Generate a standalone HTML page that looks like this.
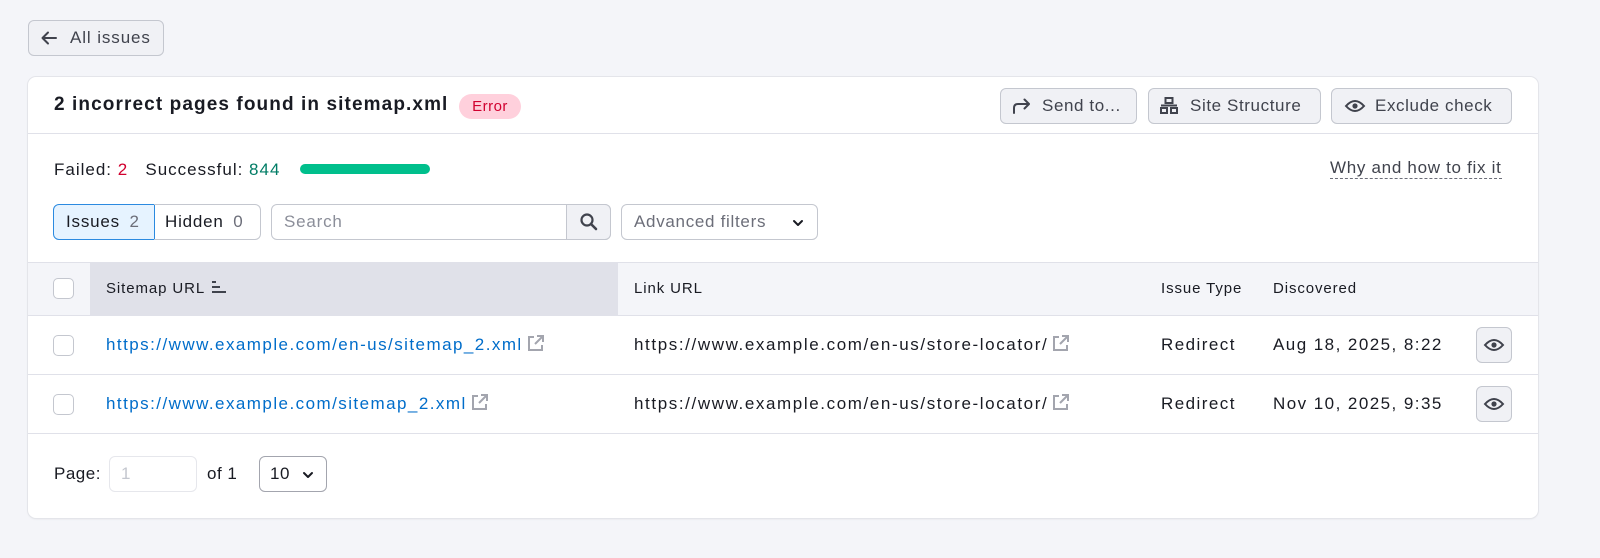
<!DOCTYPE html>
<html><head><style>
*{box-sizing:border-box;margin:0;padding:0}
body{width:1600px;height:558px;background:#f4f5f9;font-family:"Liberation Sans",sans-serif;color:#191b23;position:relative;overflow:hidden;font-size:17px;letter-spacing:1.1px}
.abs{position:absolute;white-space:nowrap}
.btn{position:absolute;border:1px solid #c4c7cf;background:#f0f1f5;border-radius:6px;display:flex;align-items:center;color:#40434d;font-size:17px;white-space:nowrap;letter-spacing:0.6px}
.card{position:absolute;left:28px;top:77px;width:1510px;height:441px;background:#fff;border-radius:8px;box-shadow:0 0 0 1px #e4e5ea,0 1px 2px rgba(0,0,0,.08)}
.hl{position:absolute;left:0;right:0;height:1px;background:#e0e1e9}
.cb{position:absolute;width:21px;height:21px;border:1px solid #c4c7cf;border-radius:5px;background:#fff}
.link{color:#006dca}
.ext{display:inline-block;vertical-align:-2px;margin-left:4px}
.th{font-size:15px;letter-spacing:0.9px}
.r{letter-spacing:1.45px}
</style></head><body>
<div class="btn" style="left:28px;top:20px;width:136px;height:36px;padding-left:10px">
<svg width="20" height="20" viewBox="0 0 20 20"><path d="M17 10H4M9 4.5L3.5 10 9 15.5" stroke="#40434d" stroke-width="2" fill="none" stroke-linecap="round" stroke-linejoin="round"/></svg>
<span style="margin-left:11px;letter-spacing:0.9px">All issues</span></div>

<div class="card">
<div class="abs" style="left:26px;top:17px;font-size:19px;font-weight:bold;letter-spacing:1.1px">2 incorrect pages found in sitemap.xml</div>
<div class="abs" style="left:431px;top:17px;height:25px;width:62px;background:#ffd0dc;border-radius:13px;color:#d1002f;font-size:15px;text-align:center;line-height:25px;letter-spacing:0.5px">Error</div>

<div class="btn" style="left:972px;top:11px;width:137px;height:36px;padding-left:10px">
<svg width="22" height="20" viewBox="0 0 22 20"><path d="M3 17V12Q3 8 7 8H18M13.5 3.5L18 8 13.5 12.5" stroke="#40434d" stroke-width="2" fill="none" stroke-linecap="round" stroke-linejoin="round"/></svg><span style="margin-left:9px">Send to...</span></div>
<div class="btn" style="left:1120px;top:11px;width:173px;height:36px;padding-left:10px">
<svg width="20" height="20" viewBox="0 0 20 20" fill="none" stroke="#40434d" stroke-width="2"><rect x="6.5" y="2" width="7" height="5"/><rect x="2" y="12" width="6" height="5"/><rect x="12" y="12" width="6" height="5"/><path d="M2 9.5h16"/></svg><span style="margin-left:11px">Site Structure</span></div>
<div class="btn" style="left:1303px;top:11px;width:181px;height:36px;padding-left:12px">
<svg width="22" height="20" viewBox="0 0 22 20"><path d="M2 10Q11 0 20 10Q11 20 2 10Z" stroke="#40434d" stroke-width="2" fill="none"/><circle cx="11" cy="10" r="2.6" fill="#40434d"/></svg><span style="margin-left:9px">Exclude check</span></div>
<div class="hl" style="top:56px"></div>

<div class="abs" style="left:26px;top:83px;font-size:17px;letter-spacing:1px">Failed: <span style="color:#d1002f">2</span>&nbsp;&nbsp;&nbsp;Successful: <span style="color:#007c65">844</span></div>
<div class="abs" style="left:272px;top:87px;width:130px;height:10px;border-radius:5px;background:#00bf8c"></div>
<div class="abs" style="left:1302px;top:81px;font-size:17px;color:#40434d;border-bottom:1px dashed #6c6e79;line-height:20px;letter-spacing:0.7px">Why and how to fix it</div>

<div class="abs" style="left:25px;top:127px;width:102px;height:36px;border:1px solid #2b8ae0;background:#e6f3ff;border-radius:6px 0 0 6px;font-size:17px;line-height:34px;padding-left:12px;letter-spacing:0.8px">Issues <span style="color:#6c6e79;margin-left:4px">2</span></div>
<div class="abs" style="left:126px;top:127px;width:107px;height:36px;border:1px solid #c4c7cf;border-left:none;border-radius:0 6px 6px 0;font-size:17px;line-height:34px;padding-left:11px;letter-spacing:0.8px">Hidden <span style="color:#6c6e79;margin-left:4px">0</span></div>
<div class="abs" style="left:243px;top:127px;width:340px;height:36px;border:1px solid #c4c7cf;border-radius:6px;font-size:17px;line-height:34px;padding-left:12px;color:#8b8e99;letter-spacing:0.8px">Search</div>
<div class="abs" style="left:538px;top:127px;width:45px;height:36px;border:1px solid #c4c7cf;border-radius:0 6px 6px 0;background:#f0f1f5;display:flex;align-items:center;justify-content:center">
<svg width="20" height="20" viewBox="0 0 20 20"><circle cx="8" cy="8" r="5.5" stroke="#40434d" stroke-width="2.2" fill="none"/><path d="M12 12l5 5" stroke="#40434d" stroke-width="2.6" stroke-linecap="round"/></svg></div>
<div class="abs" style="left:593px;top:127px;width:197px;height:36px;border:1px solid #c4c7cf;border-radius:6px;font-size:17px;line-height:34px;padding-left:12px;color:#6c6e79;letter-spacing:0.7px">Advanced filters
<svg style="position:absolute;right:12px;top:11px" width="14" height="14" viewBox="0 0 14 14"><path d="M3 5l4 4 4-4" stroke="#191b23" stroke-width="2" fill="none" stroke-linecap="round" stroke-linejoin="round"/></svg></div>

<div class="abs" style="left:0;top:185px;width:1510px;height:54px;background:#f4f5f9;border-top:1px solid #e0e1e9;border-bottom:1px solid #e0e1e9"></div>
<div class="abs" style="left:62px;top:185px;width:528px;height:54px;background:#e0e1e9"></div>
<div class="cb" style="left:25px;top:201px"></div>
<div class="abs th" style="left:78px;top:203px">Sitemap URL
<svg style="vertical-align:-1px;margin-left:2px" width="16" height="14" viewBox="0 0 16 14"><rect x="0" y="1" width="4" height="2" fill="#40434d"/><rect x="0" y="6" width="8" height="2" fill="#40434d"/><rect x="0" y="11" width="14" height="2" fill="#40434d"/></svg></div>
<div class="abs th" style="left:606px;top:203px">Link URL</div>
<div class="abs th" style="left:1133px;top:203px">Issue Type</div>
<div class="abs th" style="left:1245px;top:203px">Discovered</div>

<div class="cb" style="left:25px;top:258px"></div>
<div class="abs link r" style="left:78px;top:258px">https://www.example.com/en-us/sitemap_2.xml<svg class="ext" width="17" height="17" viewBox="0 0 17 17" fill="none" stroke="#a3a5ae" stroke-width="2"><path d="M7 2H2v13h13v-5M10 1h6v6M16 1L8 9"/></svg></div>
<div class="abs r" style="left:606px;top:258px;letter-spacing:1.6px">https://www.example.com/en-us/store-locator/<svg class="ext" width="17" height="17" viewBox="0 0 17 17" fill="none" stroke="#a3a5ae" stroke-width="2"><path d="M7 2H2v13h13v-5M10 1h6v6M16 1L8 9"/></svg></div>
<div class="abs r" style="left:1133px;top:258px">Redirect</div>
<div class="abs r" style="left:1245px;top:258px">Aug 18, 2025, 8:22</div>
<div class="btn" style="left:1448px;top:250px;width:36px;height:36px;justify-content:center"><svg width="22" height="20" viewBox="0 0 22 20"><path d="M2 10Q11 0 20 10Q11 20 2 10Z" stroke="#40434d" stroke-width="2" fill="none"/><circle cx="11" cy="10" r="2.6" fill="#40434d"/></svg></div>
<div class="hl" style="top:297px"></div>

<div class="cb" style="left:25px;top:317px"></div>
<div class="abs link r" style="left:78px;top:317px">https://www.example.com/sitemap_2.xml<svg class="ext" width="17" height="17" viewBox="0 0 17 17" fill="none" stroke="#a3a5ae" stroke-width="2"><path d="M7 2H2v13h13v-5M10 1h6v6M16 1L8 9"/></svg></div>
<div class="abs r" style="left:606px;top:317px;letter-spacing:1.6px">https://www.example.com/en-us/store-locator/<svg class="ext" width="17" height="17" viewBox="0 0 17 17" fill="none" stroke="#a3a5ae" stroke-width="2"><path d="M7 2H2v13h13v-5M10 1h6v6M16 1L8 9"/></svg></div>
<div class="abs r" style="left:1133px;top:317px">Redirect</div>
<div class="abs r" style="left:1245px;top:317px">Nov 10, 2025, 9:35</div>
<div class="btn" style="left:1448px;top:309px;width:36px;height:36px;justify-content:center"><svg width="22" height="20" viewBox="0 0 22 20"><path d="M2 10Q11 0 20 10Q11 20 2 10Z" stroke="#40434d" stroke-width="2" fill="none"/><circle cx="11" cy="10" r="2.6" fill="#40434d"/></svg></div>
<div class="hl" style="top:356px"></div>

<div class="abs" style="left:26px;top:387px;letter-spacing:0.5px">Page:</div>
<div class="abs" style="left:81px;top:379px;width:88px;height:36px;border:1px solid #e6e7ec;border-radius:6px;color:#c4c7cf;line-height:34px;padding-left:11px">1</div>
<div class="abs" style="left:179px;top:387px;letter-spacing:0.5px">of 1</div>
<div class="abs" style="left:231px;top:379px;width:68px;height:36px;border:1px solid #a3a5ae;border-radius:6px;line-height:34px;padding-left:10px;letter-spacing:0.5px">10
<svg style="position:absolute;right:11px;top:11px" width="14" height="14" viewBox="0 0 14 14"><path d="M3 5l4 4 4-4" stroke="#191b23" stroke-width="2" fill="none" stroke-linecap="round" stroke-linejoin="round"/></svg></div>
</div>
</body></html>
